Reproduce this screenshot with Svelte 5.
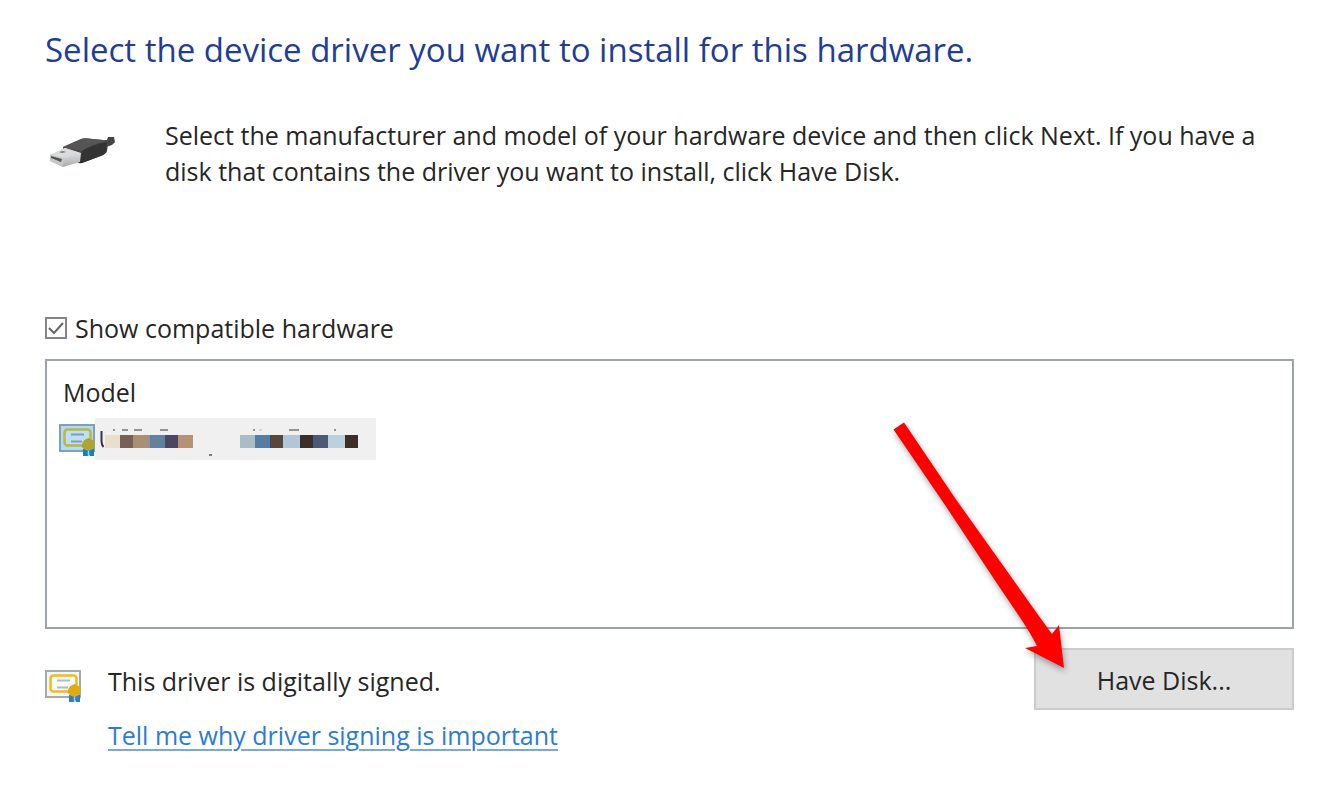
<script>
  let compatible = $state(true);
  const left = [
    [105, 15, '#e8e0ca'], [120, 13, '#776056'], [133, 15, '#a89070'], [148, 2, '#9a8ca0'],
    [150, 15, '#60829f'], [165, 13, '#4b4763'], [178, 15, '#b69172']
  ];
  const right = [
    [240, 15, '#aabdc7'], [255, 15, '#557da3'], [270, 13, '#57473c'], [283, 17, '#b0c7d9'],
    [300, 13, '#3a3028'], [313, 15, '#4d5a76'], [328, 17, '#bbd1de'], [345, 13, '#3d2f28']
  ];
</script>

{#snippet certificate(selected)}
  <svg class="certificate" width="38" height="34" viewBox="0 0 38 34" aria-hidden="true">
    <rect x="1" y="1" width="34" height="26" fill={selected ? '#b7daee' : '#f5f6f6'} stroke={selected ? '#7aa2bf' : '#a5aaaa'} stroke-width="2" />
    <rect x="5.5" y="5.500" width="26" height="16" rx="3" fill={selected ? '#bfe0f2' : '#fafafa'} stroke={selected ? '#bdb642' : '#f0bd1b'} stroke-width="2.500" />
    <path d="M12 10.500h13M12 17.500h11" stroke={selected ? '#7d9fb9' : '#b5b8bb'} stroke-width="2" />
    <path d="M24 25h11v7h-4l-1-2-1 2h-5z" fill={selected ? '#167fcb' : '#2d7fbe'} />
    <path d="M29.500 26v6" stroke="#9ccaec" stroke-width="1.500" />
    <path d="M29.500 14l3 1.500 3 2v3l.5 2-3 3-3.500 1.500-4-1.500-3-3 1-4 2-2.500z" fill={selected ? '#afa42d' : '#dfaa12'} />
  </svg>
{/snippet}

<main>
  <h1>Select the device driver you want to install for this hardware.</h1>

  <section class="intro">
    <svg class="usb" width="76" height="40" viewBox="0 0 76 40" aria-hidden="true">
      <defs>
        <linearGradient id="rubber" x1="0" y1="0" x2="0.300" y2="1">
          <stop offset="0" stop-color="#606060" /><stop offset="0.500" stop-color="#4b4b4b" /><stop offset="1" stop-color="#292929" />
        </linearGradient>
        <linearGradient id="metal" x1="0" y1="0" x2="0" y2="1">
          <stop offset="0" stop-color="#efefef" /><stop offset="1" stop-color="#a9acae" />
        </linearGradient>
      </defs>
      <path d="M55 6l7 0 1-3 6 0 1 5-3 3-6 2-5 3z" fill="#454545" />
      <path d="M18 13l18-8q3-1 7-.500l15 1.500q5 1 5 4l-1 7q-1 3-6 5l-19 7q-3 1-5-1l-14-7z" fill="url(#rubber)" />
      <path d="M18 13l18-8q3-1 7-.500l15 1.500 3 1.500-20 7-4 3q-8-3-19-4.500z" fill="#555" />
      <path d="M37 17q11-7 25-9l-1 9q-1 3-6 5l-18 7z" fill="#333" />
      <path d="M5 21l15-7 16 5-1 9-17 5-13-6z" fill="url(#metal)" />
      <path d="M5 21l15-7 15 5-16 5z" fill="#d9dbdc" />
      <path d="M5 21l14 3-1 8-13-5z" fill="#c6c8ca" />
      <path d="M6 22l11 3-1 3-10-4z" fill="#555" />
      <path d="M14 18l4-1 3 1-4 1z" fill="#777" />
    </svg>
    <p>Select the manufacturer and model of your hardware device and then click Next. If you have a disk that contains the driver you want to install, click Have Disk.</p>
  </section>

  <label class="compatible">
    <span class="box">
      <input type="checkbox" bind:checked={compatible} />
      {#if compatible}
        <svg width="22" height="22" viewBox="0 0 22 22" aria-hidden="true"><path d="M4 11l5 5 9-10" fill="none" stroke="#666" stroke-width="2" /></svg>
      {/if}
    </span>
    Show compatible hardware
  </label>

  <div class="list">
    <table>
      <thead><tr><th scope="col">Model</th></tr></thead>
      <tbody>
        <tr>
          <td>
            <div class="item">
              {@render certificate(true)}
              <svg class="redacted" width="281" height="42" viewBox="95 418 281 42" aria-hidden="true">
                <rect x="95" y="418" width="281" height="42" fill="#f0f0f0" />
                <path d="M101.500 431v10q0 4 2 6" fill="none" stroke="#35304e" stroke-width="2" />
                <path d="M113 430h2M122 430h6M134 430h8M160 430h8M253 430h2M289 430h10M334 430h2" stroke="#93928f" stroke-width="2" />
                <path d="M259 430h3" stroke="#d5d5d5" stroke-width="2" />
                <path d="M209 455h3" stroke="#77798a" stroke-width="2" />
                {#each [...left, ...right] as [x, width, fill]}
                  <rect {x} y="435" {width} height="13" {fill} />
                {/each}
              </svg>
            </div>
          </td>
        </tr>
      </tbody>
    </table>
  </div>

  <footer>
    <div class="signed">
      {@render certificate(false)}
      <div class="status">
        <p>This driver is digitally signed.</p>
        <a href="#signing">Tell me why driver signing is important</a>
      </div>
    </div>
    <div class="action">
      <button type="button">Have Disk...</button>
      <svg class="arrow" width="180" height="256" viewBox="890 418 180 256" aria-hidden="true">
        <path d="M893.500 429.500L904 422.500 955 498 1024 595Q1038 615 1052 634L1059 625 1064 668 1025 648 1037 646Q1031 634 1019 616L998 585 945 505Z" fill="#f00" />
      </svg>
    </div>
  </footer>
</main>

<style>
  :global(body) { margin: 0; background: #fff; }
  main { padding: 28px 30px 32px 45px; font: 25px/36px "Open Sans", "Segoe UI", sans-serif; color: #262626; }
  h1 { margin: 0; font-size: 33px; line-height: 44px; font-weight: 400; color: #213d94; }
  p { margin: 0; }
  .intro { display: flex; gap: 44px; margin-top: 45px; }
  .usb { flex: none; margin-top: 17px; }
  .compatible { display: flex; width: fit-content; align-items: center; gap: 8px; margin-top: 121px; }
  .box { display: grid; }
  .box input, .box svg { grid-area: 1 / 1; }
  .box svg { pointer-events: none; }
  input { appearance: none; box-sizing: border-box; width: 22px; height: 22px; margin: 0; border: 2px solid #858585; background: #fff; }
  .list { box-sizing: border-box; min-height: 270px; margin-top: 13px; padding: 13px 12px; border: 2px solid #9ea3ab; }
  table { width: 100%; border-collapse: collapse; }
  th { padding: 0 4px; font-weight: 400; text-align: left; }
  td { padding: 8px 0 0; }
  .item { display: flex; align-items: flex-end; }
  .certificate { flex: none; }
  .item .certificate { margin-bottom: 2px; }
  .redacted { display: block; margin-left: -2px; }
  footer { display: flex; justify-content: space-between; margin-top: 19px; }
  .signed { display: flex; gap: 25px; padding-top: 15px; }
  .signed .certificate { margin-top: 7px; }
  .status { display: grid; gap: 18px; }
  a { color: #2b7cd3; text-decoration-color: #73aae2; text-decoration-thickness: 2px; text-underline-offset: 4px; }
  .action { position: relative; }
  button { min-width: 260px; min-height: 62px; padding: 2px 24px 0; border: 2px solid #ccc; background: #e1e1e1; color: #262626; font: inherit; }
  .arrow { position: absolute; right: 224px; top: -230px; filter: drop-shadow(1px 3px 3px rgb(0 0 0 / 35%)); pointer-events: none; }
</style>
